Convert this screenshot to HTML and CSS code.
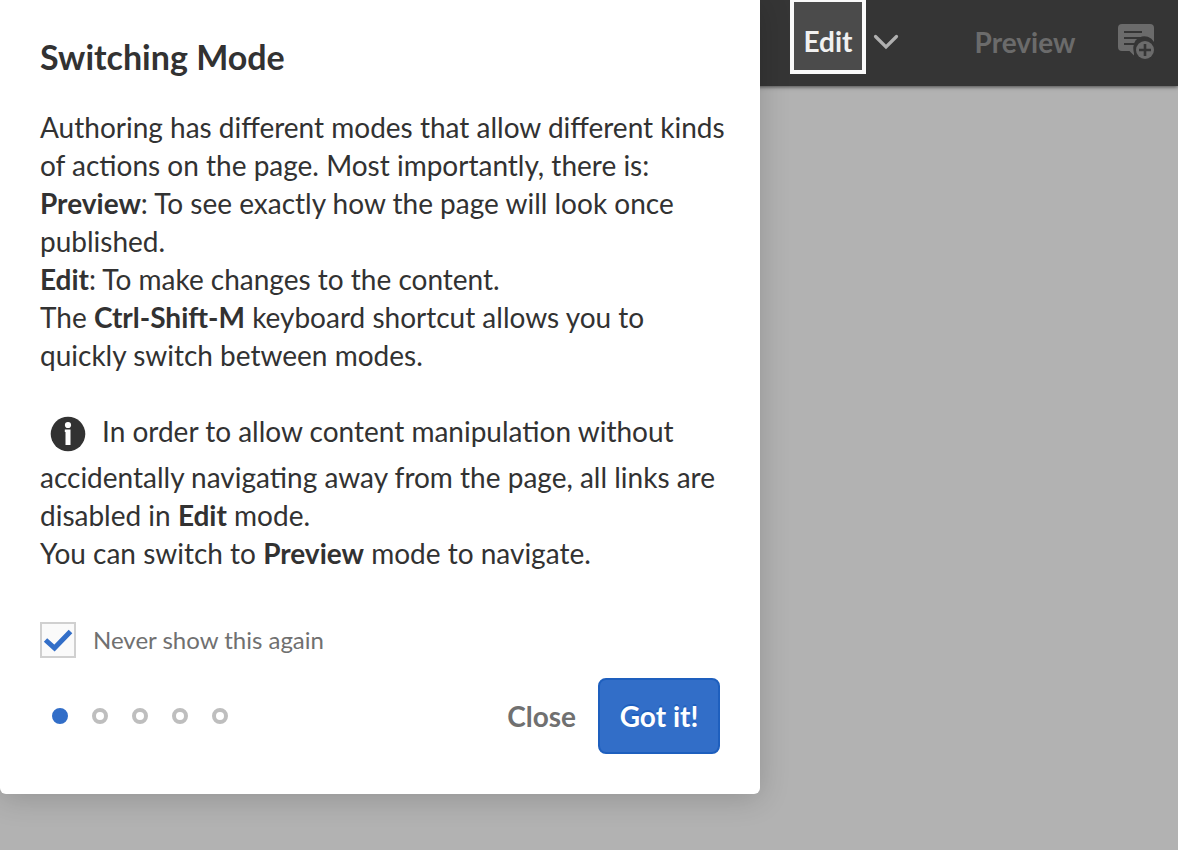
FILE: index.html
```html
<!DOCTYPE html>
<html lang="en">
<head>
<meta charset="utf-8">
<meta name="viewport" content="width=device-width, initial-scale=1">
<title>Switching Mode</title>
<link rel="stylesheet" href="styles.css">
</head>
<body>
<header class="toolbar">
  <div class="mode-switch">
    <button class="mode-current" type="button">Edit</button>
    <button class="mode-menu" type="button" aria-label="Choose mode">
      <svg width="26" height="16" viewBox="0 0 26 16" aria-hidden="true"><path d="M2.5 2.5 13 13 23.500 2.500" fill="none" stroke="#b0b0b0" stroke-width="3.200" stroke-linecap="round"/></svg>
    </button>
  </div>
  <button class="preview" type="button">Preview</button>
  <button class="annotate" type="button" aria-label="Annotate">
    <svg width="36" height="36" viewBox="0 0 36 36" aria-hidden="true">
      <path d="M4 0h28q4 0 4 4v14a11 11 0 0 0-20 9v4.500L11.500 27H4q-4 0-4-4V4q0-4 4-4z" fill="#6b6b6b"/>
      <path d="M6 8h18M6 14h24M6 20h14" stroke="#353535" stroke-width="2"/>
      <circle cx="27" cy="26" r="11.500" fill="#353535"/>
      <circle cx="27" cy="26" r="9" fill="#6b6b6b"/>
      <path d="M27 20v12M21 26h12" stroke="#353535" stroke-width="2.600"/>
    </svg>
  </button>
</header>
<main class="popover" role="dialog" aria-labelledby="tour-title">
  <h1 class="title" id="tour-title">Switching Mode</h1>
  <p class="copy">Authoring has different modes that allow different kinds<br>of actions on the page. Most importantly, there is:<br><b>Preview</b>: To see exactly how the page will look once<br>published.<br><b>Edit</b>: To make changes to the content.<br>The <b>Ctrl-Shift-M</b> keyboard shortcut allows you to<br>quickly switch between modes.</p>
  <p class="note"><span class="note-lead"><svg class="info" width="36" height="36" viewBox="0 0 36 36" aria-hidden="true"><circle cx="18" cy="18" r="17.300" fill="#323232"/><circle cx="18" cy="9" r="3.100" fill="#fff"/><path d="M14.800 13.500h5.700v15.500h-5v-13h-.7z" fill="#fff"/></svg><span>In order to allow content manipulation without</span></span>accidentally navigating away from the page, all links are<br>disabled in <b>Edit</b> mode.<br>You can switch to <b>Preview</b> mode to navigate.</p>
  <label class="never"><span class="check"><input class="check-input" type="checkbox" checked><svg class="check-mark" width="36" height="36" viewBox="0 0 36 36" aria-hidden="true"><path d="M5.500 18 14.500 26 30.500 9.500" fill="none" stroke="#326ec8" stroke-width="5"/></svg></span>Never show this again</label>
  <footer class="footer">
    <nav class="steps" aria-label="Steps">
      <button class="step step-active" type="button" aria-label="Step 1"></button>
      <button class="step" type="button" aria-label="Step 2"></button>
      <button class="step" type="button" aria-label="Step 3"></button>
      <button class="step" type="button" aria-label="Step 4"></button>
      <button class="step" type="button" aria-label="Step 5"></button>
    </nav>
    <button class="close" type="button">Close</button>
    <button class="primary" type="button">Got it!</button>
  </footer>
</main>
</body>
</html>
```
FILE: styles.css
```css
* { box-sizing: border-box; }
body {
  margin: 0;
  min-height: 100vh;
  background: #b2b2b2;
  color: #323232;
  font-family: Lato, "Open Sans", sans-serif;
  font-size: 28px;
  line-height: 38px;
}
button {
  margin: 0;
  padding: 0;
  border: 0;
  background: none;
  color: inherit;
  font: inherit;
  font-weight: 700;
}
svg { display: block; }
.toolbar {
  display: flex;
  align-items: center;
  justify-content: flex-end;
  height: 86px;
  padding: 0 24px 2px;
  background: #353535;
  box-shadow: 0 1px 4px rgba(0, 0, 0, 0.6);
}
.mode-switch {
  display: flex;
  align-self: flex-start;
  align-items: center;
  gap: 7px;
  margin-right: 75px;
}
.mode-current {
  width: 76px;
  height: 74px;
  padding-top: 10px;
  border: 4px solid #fafafa;
  border-top-width: 2px;
  background: #4b4b4b;
  color: #f0f0f0;
}
.mode-menu { padding-top: 10px; }
.preview {
  width: 102px;
  margin-right: 42px;
  color: #6b6b6b;
}
.popover {
  position: absolute;
  top: 0;
  left: 0;
  width: 760px;
  max-width: 100%;
  padding: 38px 40px 40px;
  border-radius: 0 0 6px 6px;
  background: #fff;
  box-shadow: 0 4px 30px rgba(0, 0, 0, 0.18);
}
.title {
  margin: 0 0 32px;
  font-size: 34px;
  font-weight: 700;
  line-height: 38px;
}
.copy { margin: 0 -20px 38px 0; }
.note { margin: 0 0 50px; }
.note-lead {
  display: flex;
  gap: 16px;
  padding: 0 0 8px 10px;
}
.info { margin: 4px 0 -2px; }
.never {
  display: flex;
  align-items: center;
  gap: 17px;
  height: 36px;
  margin-bottom: 20px;
  color: #707070;
  font-size: 24px;
}
.check {
  display: grid;
  width: 36px;
  height: 36px;
}
.check-input {
  grid-area: 1 / 1;
  width: 36px;
  height: 36px;
  margin: 0;
  border: 2px solid #d0d0d0;
  background: #fafafa;
  appearance: none;
}
.check-mark {
  grid-area: 1 / 1;
  z-index: 1;
  visibility: hidden;
  pointer-events: none;
}
.check-input:checked + .check-mark { visibility: visible; }
.footer {
  display: flex;
  align-items: center;
}
.steps {
  display: flex;
  gap: 24px;
  margin-right: auto;
  padding-left: 12px;
}
.step {
  width: 16px;
  height: 16px;
  border: 4px solid #bebebe;
  border-radius: 50%;
}
.step-active {
  border-color: #326ec8;
  background: #326ec8;
}
.close {
  margin-right: 22px;
  color: #707070;
}
.primary {
  width: 122px;
  height: 76px;
  border: 2px solid #1e5fbe;
  border-radius: 8px;
  background: #326ec8;
  color: #fff;
  text-shadow: 0 -2px 0 #1e5fbe;
}
```
